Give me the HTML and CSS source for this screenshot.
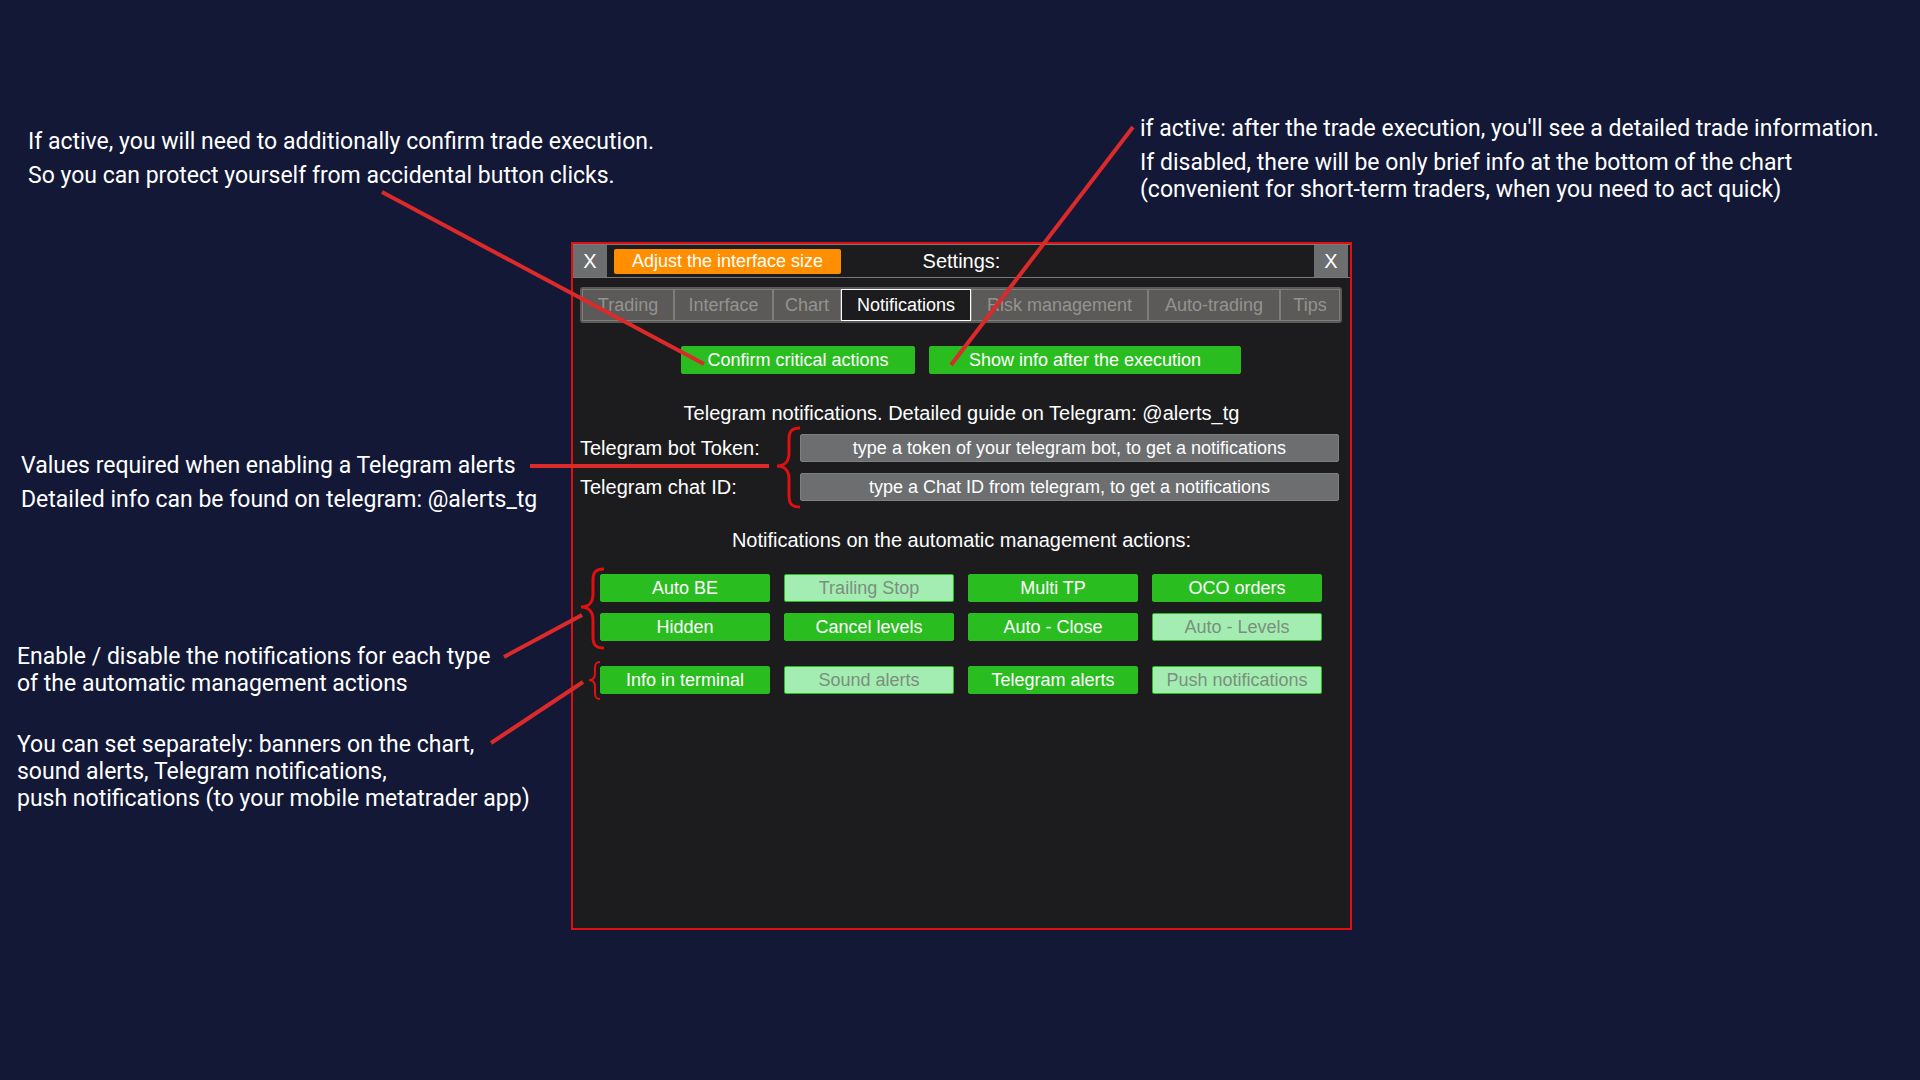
FILE: index.html
```html
<!DOCTYPE html>
<html lang="en">
<head>
  <meta charset="UTF-8" />
  <meta name="viewport" content="width=device-width, initial-scale=1.0" />
  <title>Settings: Notifications</title>
  <link rel="stylesheet" href="styles.css">
</head>
<body>
  <div class="page">
    <div class="top-notes">
      <div class="note note-confirm">
        <p>If active, you will need to additionally confirm trade execution.</p>
        <p>So you can protect yourself from accidental button clicks.</p>
      </div>
      <div class="note note-info">
        <p>if active: after the trade execution, you'll see a detailed trade information.</p>
        <p>If disabled, there will be only brief info at the bottom of the chart<br>(convenient for short-term traders, when you need to act quick)</p>
      </div>
    </div>

    <div class="columns">
      <div class="side-notes">
        <div class="note note-telegram">
          <p>Values required when enabling a Telegram alerts</p>
          <p>Detailed info can be found on telegram: @alerts_tg</p>
        </div>
        <div class="note note-types">
          <p>Enable / disable the notifications for each type<br>of the automatic management actions</p>
        </div>
        <div class="note note-channels">
          <p>You can set separately: banners on the chart,<br>sound alerts, Telegram notifications,<br>push notifications (to your mobile metatrader app)</p>
        </div>
      </div>

      <main class="window">
        <header class="titlebar">
          <div class="titlebar-left">
            <button class="close" type="button">X</button>
            <button class="adjust" type="button">Adjust the interface size</button>
          </div>
          <h1>Settings:</h1>
          <button class="close close-right" type="button">X</button>
        </header>

        <nav class="tabs">
          <button type="button">Trading</button>
          <button type="button">Interface</button>
          <button type="button">Chart</button>
          <button type="button" class="active">Notifications</button>
          <button type="button">Risk management</button>
          <button type="button">Auto-trading</button>
          <button type="button">Tips</button>
        </nav>

        <div class="confirm-row">
          <button class="toggle" type="button">Confirm critical actions</button>
          <button class="toggle" type="button">Show info after the execution</button>
        </div>

        <h2>Telegram notifications. Detailed guide on Telegram: @alerts_tg</h2>
        <form class="fields">
          <label for="bot-token">Telegram bot Token:</label>
          <input type="text" id="bot-token" placeholder="type a token of your telegram bot, to get a notifications" />
          <label for="chat-id">Telegram chat ID:</label>
          <input type="text" id="chat-id" placeholder="type a Chat ID from telegram, to get a notifications" />
        </form>

        <h2>Notifications on the automatic management actions:</h2>
        <div class="toggles">
          <button class="toggle" type="button">Auto BE</button>
          <button class="toggle off" type="button">Trailing Stop</button>
          <button class="toggle" type="button">Multi TP</button>
          <button class="toggle" type="button">OCO orders</button>
          <button class="toggle" type="button">Hidden</button>
          <button class="toggle" type="button">Cancel levels</button>
          <button class="toggle" type="button">Auto - Close</button>
          <button class="toggle off" type="button">Auto - Levels</button>
        </div>
        <div class="toggles channels">
          <button class="toggle" type="button">Info in terminal</button>
          <button class="toggle off" type="button">Sound alerts</button>
          <button class="toggle" type="button">Telegram alerts</button>
          <button class="toggle off" type="button">Push notifications</button>
        </div>
      </main>
    </div>

    <!-- pointers from the notes to the controls -->
    <svg class="pointers" viewBox="0 0 1920 1080" preserveAspectRatio="xMidYMin meet" aria-hidden="true">
      <g class="lines">
        <path d="M382 192 704 364" />
        <path d="M1133 127 951 365" />
        <path d="M530 466H769" />
        <path d="M504 657 582 615" />
        <path d="M491 743 583 682" />
      </g>
      <g class="braces">
        <path d="M800 428C792 428 789 431 789 439V453C789 461 785 466 777 466C785 466 789 471 789 479V496C789 504 792 507 800 507" />
        <path d="M604 569C596 569 593 572 593 580V594C593 602 589 607 581 607C589 607 593 612 593 620V637C593 645 596 648 604 648" />
        <path class="thin" d="M600 662C596 662 595 664 595 668V673C595 677 593 680 589 680C593 680 595 683 595 687V693C595 697 596 699 600 699" />
      </g>
    </svg>
  </div>
</body>
</html>
```
FILE: styles.css
```css
* {
  box-sizing: border-box;
}

body {
  margin: 0;
  background-color: #121836;
  color: white;
  font-family: "Liberation Sans", Arial, sans-serif;
}

h1, h2, p {
  margin: 0;
  font-weight: normal;
}

button, input {
  font-family: inherit;
  font-size: 18px;
  color: white;
  padding: 0;
  border: none;
}

button {
  cursor: pointer;
}

.page {
  position: relative;
  min-height: 100vh;
}

/* notes */
.note {
  font-family: Roboto, sans-serif;
  font-size: 23px;
  line-height: 27px;
  white-space: nowrap;
}

.note p + p {
  margin-top: 7px;
}

.top-notes {
  display: grid;
  grid-template-columns: minmax(0, 1112fr) minmax(0, 752fr);
  padding: 115px 28px 39px;
}

.note-confirm {
  padding-top: 13px;
}

.columns {
  display: grid;
  grid-template-columns: 571fr 781px 568fr;
}

.side-notes {
  padding: 210px 0 0 17px;
}

.note-telegram {
  padding-left: 4px;
}

.note-types {
  margin-top: 130px;
}

.note-channels {
  margin-top: 34px;
}

/* settings window */
.window {
  min-height: 688px;
  background-color: #1c1c1e;
  border: 2px solid #e01010;
}

.titlebar {
  display: grid;
  grid-template-columns: 1fr auto 1fr;
  align-items: center;
  height: 34px;
  border-top: 1px solid #77797b;
  border-bottom: 1px solid #77797b;
}

.titlebar-left {
  display: flex;
  align-items: center;
  gap: 7px;
}

.close {
  width: 34px;
  height: 32px;
  background-color: #6c6e70;
  font-size: 20px;
}

.close-right {
  justify-self: end;
  margin-right: 2px;
}

.adjust {
  width: 227px;
  height: 25px;
  border-radius: 2px;
  background-color: #ff8f00;
}

h1, h2, label {
  font-size: 20px;
  line-height: 28px;
}

.tabs {
  display: grid;
  grid-template-columns: 92fr 99fr 68fr 130fr 177fr 132fr 60fr;
  margin: 9px 8px 0 7px;
  padding: 2px;
  border-radius: 3px;
  background-color: #5b5a58;
}

.tabs button {
  height: 32px;
  border: 1px solid #7d7d7c;
  background: none;
  color: #94938f;
}

.tabs .active {
  border-color: white;
  background-color: #1c1c1e;
  color: white;
}

.toggle {
  height: 28px;
  border: 1px solid #2abd1f;
  border-radius: 2px;
  background-color: #2abd1f;
}

.toggle.off {
  background-color: #a3edb2;
  color: #7b8f7e;
}

.confirm-row {
  display: grid;
  grid-template-columns: 234fr 312fr;
  gap: 14px;
  margin: 23px 109px 25px 108px;
}

h2 {
  text-align: center;
}

.fields {
  display: grid;
  grid-template-columns: 1fr 539px;
  row-gap: 11px;
  margin: 7px 11px 25px 7px;
}

.fields input {
  height: 28px;
  border: 1px solid #7d7f81;
  border-radius: 2px;
  background-color: #6c6e70;
  text-align: center;
}

.fields input::placeholder {
  color: white;
  opacity: 1;
}

.toggles {
  display: grid;
  grid-template-columns: repeat(4, 1fr);
  gap: 11px 14px;
  margin: 20px 28px 0 27px;
}

.channels {
  margin-top: 25px;
}

/* red lines over the page */
.pointers {
  position: absolute;
  top: 0;
  left: 0;
  width: 100%;
  pointer-events: none;
  fill: none;
}

.lines {
  stroke: #dc2a2a;
  stroke-width: 4;
}

.braces {
  stroke: #e01010;
  stroke-width: 3;
}

.braces .thin {
  stroke-width: 2;
}
```
